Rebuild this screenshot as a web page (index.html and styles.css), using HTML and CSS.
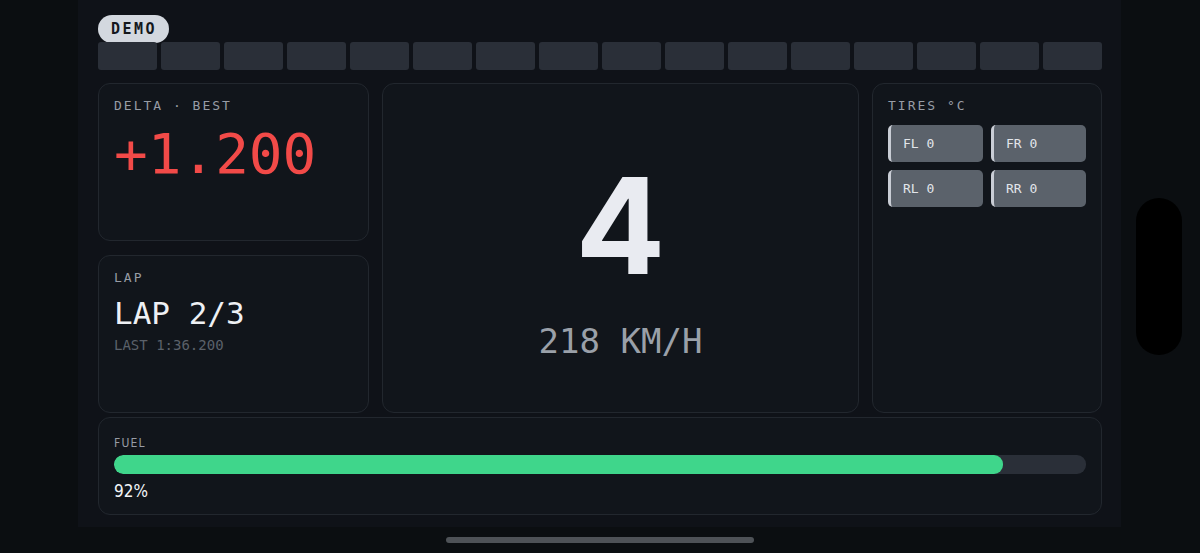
FILE: index.html
```html
<!DOCTYPE html>
<html>
<head>
<meta charset="utf-8">
<link rel="stylesheet" href="styles.css">
</head>
<body>
<div class="screen">
  <div class="app">
    <div class="badge">DEMO</div>
    <div class="segments">
      <span></span><span></span><span></span><span></span>
      <span></span><span></span><span></span><span></span>
      <span></span><span></span><span></span><span></span>
      <span></span><span></span><span></span><span></span>
    </div>
    <div class="grid">
      <div class="card delta">
        <div class="label">DELTA · BEST</div>
        <div class="delta-value">+1.200</div>
      </div>
      <div class="card center">
        <div class="gear">4</div>
        <div class="speed">218 KM/H</div>
      </div>
      <div class="card tires">
        <div class="label">TIRES °C</div>
        <div class="tire-grid">
          <div class="tire">FL 0</div>
          <div class="tire">FR 0</div>
          <div class="tire">RL 0</div>
          <div class="tire">RR 0</div>
        </div>
      </div>
      <div class="card lap">
        <div class="label">LAP</div>
        <div class="lap-value">LAP 2/3</div>
        <div class="last">LAST 1:36.200</div>
      </div>
    </div>
    <div class="card fuel">
      <div class="fuel-label">FUEL</div>
      <div class="track"><div class="fill" style="width:91.5%"></div></div>
      <div class="fuel-pct">92%</div>
    </div>
  </div>
  <div class="pill"></div>
  <div class="home"></div>
</div>
</body>
</html>
```
FILE: styles.css
```css
html, body {
  margin: 0;
  padding: 0;
  background: #0b0e11;
}
.screen {
  position: relative;
  width: 1200px;
  height: 553px;
  overflow: hidden;
  background: #0b0e11;
}
.app {
  margin-left: 78px;
  width: 1043px;
  height: 527px;
  box-sizing: border-box;
  padding: 15px 19px 0 20px;
  background: #0f1218;
  font-family: "DejaVu Sans Mono", monospace;
}
.badge {
  display: inline-block;
  height: 28px;
  line-height: 28px;
  padding: 0 12px 0 13px;
  border-radius: 14px;
  background: #d3d8df;
  color: #14171c;
  font-weight: 700;
  font-size: 15px;
  letter-spacing: 2.5px;
}
.segments {
  display: grid;
  grid-template-columns: repeat(16, 1fr);
  gap: 4px;
  height: 28px;
  margin-top: -1px;
}
.segments span {
  background: #2a2f38;
  border-radius: 3px;
}
.grid {
  display: grid;
  grid-template-columns: 271px 477px 230px;
  grid-template-rows: 158px 158px;
  column-gap: 13px;
  row-gap: 14px;
  margin-top: 13px;
}
.card {
  box-sizing: border-box;
  background: #11151b;
  border: 1px solid #22272e;
  border-radius: 12px;
  padding: 14px 15px;
}
.label {
  font-size: 13px;
  line-height: 16px;
  letter-spacing: 2px;
  color: #979ca5;
}
.delta { grid-column: 1; grid-row: 1; }
.lap { grid-column: 1; grid-row: 2; }
.center {
  grid-column: 2;
  grid-row: 1 / span 2;
  display: flex;
  flex-direction: column;
  align-items: center;
  justify-content: center;
  padding-top: 34px;
}
.tires { grid-column: 3; grid-row: 1 / span 2; }
.delta-value {
  margin-top: 12px;
  font-size: 56px;
  line-height: 1;
  color: #f24a48;
}
.lap-value {
  margin-top: 12px;
  font-size: 31px;
  line-height: 1;
  color: #eef0f4;
}
.last {
  margin-top: 8px;
  font-size: 14px;
  line-height: 1.2;
  color: #5b616a;
}
.gear {
  font-family: Inter, "Noto Sans", sans-serif;
  font-weight: 700;
  font-size: 133px;
  line-height: 1;
  color: #e9ebf1;
}
.speed {
  margin-top: 32px;
  font-size: 34px;
  line-height: 1;
  color: #9aa0a9;
}
.tire-grid {
  display: grid;
  grid-template-columns: 1fr 1fr;
  gap: 8px;
  margin-top: 11px;
}
.tire {
  height: 37px;
  box-sizing: border-box;
  display: flex;
  align-items: center;
  padding-left: 12px;
  background: #5b626b;
  border-left: 3px solid #c9cdd5;
  border-radius: 5px;
  font-size: 13px;
  color: #e2e5ea;
}
.fuel {
  margin-top: 4px;
  height: 98px;
  padding: 17px 15px 0 15px;
}
.fuel-label {
  font-family: "DejaVu Sans Condensed", "Liberation Sans", sans-serif;
  font-size: 12px;
  line-height: 16px;
  letter-spacing: 1.2px;
  color: #979ca5;
}
.track {
  margin-top: 4px;
  height: 19px;
  border-radius: 9px;
  background: #2a2f38;
  overflow: hidden;
}
.fill {
  height: 100%;
  background: #3fd68b;
  border-radius: 9px;
}
.fuel-pct {
  margin-top: 7px;
  font-family: "DejaVu Sans Condensed", "Liberation Sans", sans-serif;
  font-size: 17px;
  line-height: 20px;
  color: #f2f4f7;
}
.pill {
  position: absolute;
  left: 1136px;
  top: 198px;
  width: 46px;
  height: 157px;
  border-radius: 23px;
  background: #000;
}
.home {
  position: absolute;
  left: 446px;
  top: 537px;
  width: 308px;
  height: 6px;
  border-radius: 3px;
  background: #4e5257;
}
```
